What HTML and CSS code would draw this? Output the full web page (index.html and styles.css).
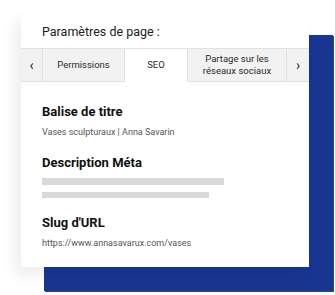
FILE: index.html
```html
<!DOCTYPE html>
<html lang="fr">
<head>
    <meta charset="UTF-8">
    <meta name="viewport" content="width=device-width, initial-scale=1.0">
    <title>Paramètres de page</title>
    <link rel="stylesheet" href="styles.css">
</head>
<body>
    <div class="stage">
        <div class="backdrop"></div>

        <div class="card">
            <div class="card-header">Paramètres de page :</div>

            <div class="tabs">
                <div class="tab tab-arrow">&lsaquo;</div>
                <div class="tab tab-permissions">Permissions</div>
                <div class="tab tab-seo active">SEO</div>
                <div class="tab tab-social">Partage sur les<br>réseaux sociaux</div>
                <div class="tab tab-arrow">&rsaquo;</div>
            </div>

            <div class="card-body">
                <div class="field-title">Balise de titre</div>
                <div class="field-value">Vases sculpturaux | Anna Savarin</div>

                <div class="field-title spaced">Description Méta</div>
                <div class="placeholder">
                    <div class="bar bar-long"></div>
                    <div class="bar bar-short"></div>
                </div>

                <div class="field-title spaced-lg">Slug d'URL</div>
                <div class="field-value">https://www.annasavarux.com/vases</div>
            </div>
        </div>
    </div>
</body>
</html>
```

FILE: styles.css
```css
body {
    margin: 0;
    background: #ffffff;
    font-family: 'Roboto', 'Liberation Sans', sans-serif;
    color: #1a1a1a;
}

.stage {
    position: relative;
    width: 335px;
    height: 295px;
    padding: 13px 0 0 21px;
    box-sizing: border-box;
    overflow: hidden;
}

/* blue block sitting behind the card */
.backdrop {
    position: absolute;
    left: 44px;
    top: 35px;
    width: 289px;
    height: 256px;
    background: #183591;
    box-shadow: 1px 1px 0 #2c4599;
}

.card {
    position: relative;
    width: 288px;
    height: 254px;
    background: white;
    box-shadow: -6px 8px 14px rgba(0,0,0,0.07);
}

.card-header {
    height: 35px;
    padding: 1px 21px 0;
    box-sizing: border-box;
    display: flex;
    align-items: center;
    font-size: 12.5px;
    color: #222;
}

.tabs {
    display: flex;
    height: 34px;
    border-top: 1px solid #dde3ea;
    box-sizing: border-box;
}

.tab {
    display: flex;
    align-items: center;
    justify-content: center;
    text-align: center;
    background: #f2f2f2;
    border-right: 1px solid #e0e0e0;
    border-bottom: 1px solid #dde3ea;
    font-size: 9.5px;
    line-height: 12px;
    color: #2a2a2a;
    box-sizing: border-box;
}

.tab:last-child {
    border-right: none;
}

.tab-arrow {
    width: 22px;
    font-size: 14px;
}

.tab-permissions {
    width: 82px;
}

.tab-seo {
    width: 63px;
}

.tab-social {
    width: 99px;
}

.tab.active {
    background: white;
    border-bottom-color: white;
}

.card-body {
    padding: 22px 21px 0;
}

.field-title {
    font-size: 13px;
    font-weight: bold;
    line-height: 16px;
    color: #111;
}

.field-value {
    margin-top: 5px;
    font-size: 9px;
    line-height: 14px;
    color: #555;
}

.spaced {
    margin-top: 16px;
}

.spaced-lg {
    margin-top: 17px;
}

.placeholder {
    margin-top: 7px;
    display: flex;
    flex-direction: column;
    gap: 7px;
}

.bar {
    height: 7px;
    background: #d9d9d9;
}

.bar-long {
    width: 182px;
}

.bar-short {
    width: 167px;
    height: 6px;
}
```
